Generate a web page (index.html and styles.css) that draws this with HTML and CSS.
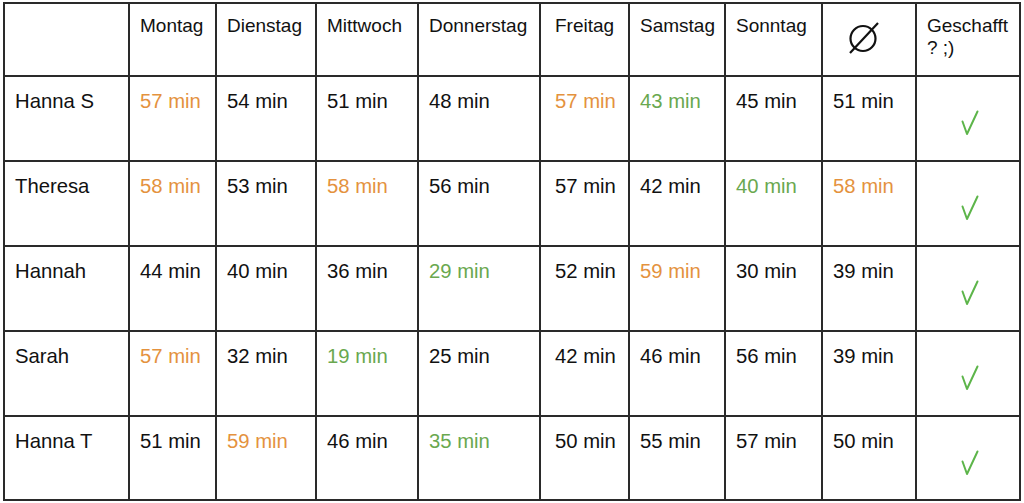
FILE: index.html
```html
<!DOCTYPE html>
<html lang="de">
<head>
<meta charset="utf-8">
<title>Zeiten</title>
<link rel="stylesheet" href="styles.css">
</head>
<body>
<div class="page">
<table class="grid">
  <colgroup>
    <col class="c-name"><col class="c-mo"><col class="c-di"><col class="c-mi"><col class="c-do"><col class="c-fr"><col class="c-sa"><col class="c-so"><col class="c-avg"><col class="c-done">
  </colgroup>
  <thead>
    <tr class="head">
      <th></th>
      <th>Montag</th>
      <th>Dienstag</th>
      <th>Mittwoch</th>
      <th>Donnerstag</th>
      <th class="fr">Freitag</th>
      <th>Samstag</th>
      <th>Sonntag</th>
      <th class="avg"><svg class="avg-icon" width="32" height="34" viewBox="0 0 32 34" aria-label="Durchschnitt"><circle cx="15" cy="17.5" r="12.5" fill="none" stroke="#111" stroke-width="2.2"/><line x1="2" y1="32" x2="30" y2="2" stroke="#111" stroke-width="2.2"/></svg></th>
      <th>Geschafft ? ;)</th>
    </tr>
  </thead>
  <tbody>
    <tr>
      <td>Hanna S</td>
      <td class="o">57 min</td><td>54 min</td><td>51 min</td><td>48 min</td><td class="o fr">57 min</td><td class="g">43 min</td><td>45 min</td><td>51 min</td>
      <td class="done"><svg class="check" width="18" height="26" viewBox="0 0 18 26"><path d="M1.5 11.5 L6 24 L16.5 1.5" fill="none" stroke="#5db54a" stroke-width="2" stroke-linecap="round" stroke-linejoin="round"/></svg></td>
    </tr>
    <tr>
      <td>Theresa</td>
      <td class="o">58 min</td><td>53 min</td><td class="o">58 min</td><td>56 min</td><td class="fr">57 min</td><td>42 min</td><td class="g">40 min</td><td class="o">58 min</td>
      <td class="done"><svg class="check" width="18" height="26" viewBox="0 0 18 26"><path d="M1.5 11.5 L6 24 L16.5 1.5" fill="none" stroke="#5db54a" stroke-width="2" stroke-linecap="round" stroke-linejoin="round"/></svg></td>
    </tr>
    <tr>
      <td>Hannah</td>
      <td>44 min</td><td>40 min</td><td>36 min</td><td class="g">29 min</td><td class="fr">52 min</td><td class="o">59 min</td><td>30 min</td><td>39 min</td>
      <td class="done"><svg class="check" width="18" height="26" viewBox="0 0 18 26"><path d="M1.5 11.5 L6 24 L16.5 1.5" fill="none" stroke="#5db54a" stroke-width="2" stroke-linecap="round" stroke-linejoin="round"/></svg></td>
    </tr>
    <tr>
      <td>Sarah</td>
      <td class="o">57 min</td><td>32 min</td><td class="g">19 min</td><td>25 min</td><td class="fr">42 min</td><td>46 min</td><td>56 min</td><td>39 min</td>
      <td class="done"><svg class="check" width="18" height="26" viewBox="0 0 18 26"><path d="M1.5 11.5 L6 24 L16.5 1.5" fill="none" stroke="#5db54a" stroke-width="2" stroke-linecap="round" stroke-linejoin="round"/></svg></td>
    </tr>
    <tr class="last">
      <td>Hanna T</td>
      <td>51 min</td><td class="o">59 min</td><td>46 min</td><td class="g">35 min</td><td class="fr">50 min</td><td>55 min</td><td>57 min</td><td>50 min</td>
      <td class="done"><svg class="check" width="18" height="26" viewBox="0 0 18 26"><path d="M1.5 11.5 L6 24 L16.5 1.5" fill="none" stroke="#5db54a" stroke-width="2" stroke-linecap="round" stroke-linejoin="round"/></svg></td>
    </tr>
  </tbody>
</table>
</div>
</body>
</html>
```
FILE: styles.css
```css
html, body {
  margin: 0;
  padding: 0;
  background: #ffffff;
}

.page {
  padding: 2px 0 0 3px;
  font-family: "Liberation Sans", Arial, Helvetica, sans-serif;
  color: #111;
}

.grid {
  border-collapse: collapse;
  table-layout: fixed;
  width: 1016px;
}

.c-name { width: 125px; }
.c-mo   { width: 87px; }
.c-di   { width: 100px; }
.c-mi   { width: 102px; }
.c-do   { width: 122px; }
.c-fr   { width: 89px; }
.c-sa   { width: 96px; }
.c-so   { width: 97px; }
.c-avg  { width: 94px; }
.c-done { width: 104px; }

.grid th,
.grid td {
  border: 2px solid #2a2a2a;
  vertical-align: top;
  text-align: left;
  padding: 0 8px 0 10px;
  overflow: hidden;
}

.grid th {
  font-weight: normal;
  font-size: 19px;
  line-height: 22px;
  height: 73px;
  padding-top: 11px;
  box-sizing: border-box;
}

.grid td {
  font-size: 20.3px;
  line-height: 23px;
  height: 85px;
  padding-top: 13px;
  box-sizing: border-box;
}

.grid tr.last td {
  height: 84px;
}

.grid .fr {
  padding-left: 14px;
}

.grid th.avg {
  padding-top: 17px;
  padding-left: 0;
}

.avg-icon {
  display: block;
  margin-left: 25px;
}

.o { color: #e4923e; }
.g { color: #6aa84f; }

.grid td.done {
  padding: 33px 0 0 0;
}

.check {
  display: block;
  margin: 0 auto;
  position: relative;
  left: 2px;
}
```
